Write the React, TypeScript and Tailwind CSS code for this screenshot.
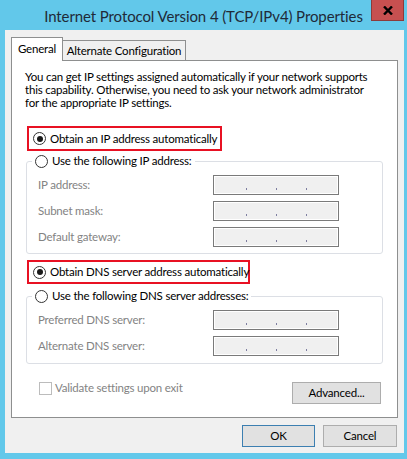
import React from "react";

const font = { fontFamily: 'Lato, "Noto Sans", sans-serif' };

function Radio({ checked }: { checked?: boolean }) {
  return (
    <span className="flex h-[13px] w-[13px] shrink-0 items-center justify-center rounded-full border border-[#333333] bg-white">
      {checked && <span className="h-[6px] w-[6px] rounded-full bg-[#1a1a1a]" />}
    </span>
  );
}

function IpField() {
  return (
    <div className="relative h-[20px] w-[126px] border border-[#7a7a7a] bg-[#f0f0f0] shadow-[inset_0_0_0_1px_#ffffff]">
      <div className="flex h-full items-end pb-[4px] pl-[32px]">
        <span className="h-[2px] w-[1px] bg-[#7d7da0]" />
        <span className="ml-[29px] h-[2px] w-[1px] bg-[#7d7da0]" />
        <span className="ml-[29px] h-[2px] w-[1px] bg-[#7d7da0]" />
      </div>
    </div>
  );
}

function FieldRow({ label }: { label: string }) {
  return (
    <div className="flex h-[20px] items-center">
      <span className="w-[186px] pl-[11px] leading-[14px] text-[#838383]">{label}</span>
      <IpField />
    </div>
  );
}

function Button({ children, primary, className = "" }: { children: React.ReactNode; primary?: boolean; className?: string }) {
  return (
    <div
      className={`flex items-center justify-center border bg-[#e1e1e1] leading-[14px] text-[#000000] ${
        primary ? "border-[#3c7fb1]" : "border-[#adadad]"
      } ${className}`}
    >
      {children}
    </div>
  );
}

export default function App() {
  return (
    <div className="relative h-[459px] w-[407px] bg-[#62c8ea] text-[11.5px] tracking-[-0.2px] text-black" style={font}>
      {/* title bar */}
      <div className="flex h-[30px]">
        <div className="flex flex-1 items-center justify-center pt-[2px] text-[15px] leading-[20px] tracking-[-0.1px] text-[#1f2a38]">
          Internet Protocol Version 4 (TCP/IPv4) Properties
        </div>
      </div>
      <div className="absolute right-[3px] top-0 flex h-[21px] w-[33px] items-center justify-center border border-t-0 border-[#8c3b3b] bg-[#c75050]">
        <svg width="10" height="9" viewBox="0 0 10 9">
          <path d="M1 0.5 L9 8.5 M9 0.5 L1 8.5" stroke="#000" strokeWidth="2.4" />
        </svg>
      </div>
      {/* client */}
      <div className="ml-[5px] mr-[3px] flex h-[423px] flex-col bg-[#f0f0f0] px-[6px] pt-[7px]">
        {/* tabs */}
        <div className="flex h-[23px] items-end">
          <div className="relative z-10 -mb-[1px] flex h-[24px] w-[52px] items-start justify-center border border-b-0 border-[#8e8f8f] bg-white pt-[4px] leading-[14px]">
            General
          </div>
          <div className="flex h-[20px] w-[123px] items-center justify-center border border-b-0 border-l-0 border-[#8e8f8f] bg-[#f0f0f0] pt-[1px] leading-[14px]">
            Alternate Configuration
          </div>
        </div>
        {/* panel */}
        <div className="flex h-[358px] w-[387px] flex-col border border-[#8e8f8f] bg-white px-[15px] pt-[9px]">
          <p className="-ml-[2px] w-[348px] leading-[13px]">
            You can get IP settings assigned automatically if your network supports this capability. Otherwise, you need to ask your network administrator for the appropriate IP settings.
          </p>

          <div className="mt-[17px] flex h-[25px] w-[195px] items-center border-2 border-[#e81123] pl-[4px]">
            <Radio checked />
            <span className="ml-[4px] whitespace-nowrap leading-[14px]">Obtain an IP address automatically</span>
          </div>

          <fieldset className="-ml-[1px] mt-[3px] h-[100px] w-[357px] rounded-[3px] border border-[#dcdfe5] px-0">
            <legend className="ml-[5px] flex items-center pl-[3px] pr-[3px]">
              <Radio />
              <span className="ml-[4px] leading-[14px]">Use the following IP address:</span>
            </legend>
            <div className="mt-[7px] flex flex-col gap-[6px]">
              <FieldRow label="IP address:" />
              <FieldRow label="Subnet mask:" />
              <FieldRow label="Default gateway:" />
            </div>
          </fieldset>

          <div className="mt-[6px] flex h-[24px] w-[223px] items-center border-2 border-[#e81123] pl-[4px]">
            <Radio checked />
            <span className="ml-[4px] whitespace-nowrap leading-[14px]">Obtain DNS server address automatically</span>
          </div>

          <fieldset className="-ml-[1px] mt-[5px] h-[75px] w-[357px] rounded-[3px] border border-[#dcdfe5] px-0">
            <legend className="ml-[5px] flex items-center pl-[3px] pr-[3px]">
              <Radio />
              <span className="ml-[4px] leading-[14px]">Use the following DNS server addresses:</span>
            </legend>
            <div className="mt-[7px] flex flex-col gap-[6px]">
              <FieldRow label="Preferred DNS server:" />
              <FieldRow label="Alternate DNS server:" />
            </div>
          </fieldset>

          <div className="mt-[17px] flex items-start">
            <div className="ml-[12px] flex items-center">
              <span className="h-[13px] w-[13px] border border-[#bcbcbc] bg-white" />
              <span className="ml-[3px] leading-[14px] text-[#838383]">Validate settings upon exit</span>
            </div>
            <Button className="ml-auto mr-[1px] mt-[1px] h-[22px] w-[89px]">Advanced...</Button>
          </div>
        </div>
        {/* bottom buttons */}
        <div className="mt-[7px] flex justify-end gap-[8px] pr-[1px]">
          <Button primary className="h-[22px] w-[73px]">OK</Button>
          <Button className="h-[22px] w-[74px]">Cancel</Button>
        </div>
      </div>
    </div>
  );
}
